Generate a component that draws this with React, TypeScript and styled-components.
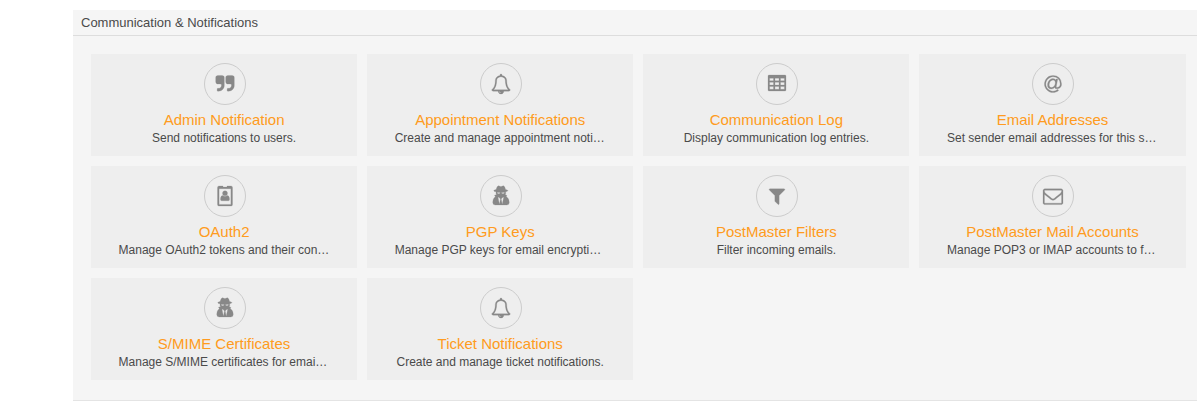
import React from 'react';
import styled, { createGlobalStyle } from 'styled-components';

const GlobalStyle = createGlobalStyle`
  body {
    margin: 0;
    background: #fff;
    font-family: Arial, "Liberation Sans", sans-serif;
    color: #4a4a4a;
  }
`;

const Page = styled.div`
  padding: 10px 0 0 73px;
  overflow: hidden;
`;

const Panel = styled.section`
  box-sizing: border-box;
  height: 391px;
  background: #f5f5f5;
  border-bottom: 1px solid #e4e4e4;
`;

const Header = styled.h2`
  box-sizing: border-box;
  height: 26px;
  margin: 0;
  padding: 0 8px;
  border-bottom: 1px solid #ddd;
  font-size: 13px;
  font-weight: normal;
  line-height: 25px;
`;

const Grid = styled.ul`
  display: grid;
  grid-template-columns: repeat(4, 266.15px);
  grid-auto-rows: 102px;
  gap: 10px;
  margin: 0;
  padding: 18px 11px 0 18px;
  list-style: none;
`;

const Card = styled.li`
  display: flex;
  flex-direction: column;
  align-items: center;
  min-width: 0;
  padding-top: 9px;
  box-sizing: border-box;
  background: #eee;
`;

const IconRing = styled.span`
  display: flex;
  align-items: center;
  justify-content: center;
  box-sizing: border-box;
  width: 42px;
  height: 42px;
  margin-left: 2px;
  border: 1px solid #ccc;
  border-radius: 50%;
  color: #888;
`;

const Glyph = styled.svg`
  display: block;
  width: 20px;
  height: 20px;
  overflow: visible;
  fill: currentColor;
  stroke: currentColor;
  stroke-width: 0.25px;

  path {
    vector-effect: non-scaling-stroke;
  }
`;

const Title = styled.h3`
  margin: 6px 0 0;
  color: #ff9b20;
  font-size: 15px;
  font-weight: normal;
  line-height: 18px;
  white-space: nowrap;
`;

const Description = styled.p<{ $shortened: boolean }>`
  width: 211px;
  margin: 2px 0 0;
  font-size: 12px;
  line-height: 14px;
  text-align: ${({ $shortened }) => ($shortened ? 'left' : 'center')};
  white-space: nowrap;
`;

type IconName = 'quote' | 'bell' | 'table' | 'at' | 'badge' | 'agent' | 'filter' | 'mail';

const paths: Record<IconName, { box: string; d: string }> = {
  quote: {
    box: '0 0 1792 1792',
    d: 'M832 320v704q0 104-40.5 198.5t-109.5 163.5-163.5 109.5-198.5 40.5h-64q-26 0-45-19t-19-45v-128q0-26 19-45t45-19h64q106 0 181-75t75-181v-32q0-40-28-68t-68-28h-224q-80 0-136-56t-56-136v-384q0-80 56-136t136-56h384q80 0 136 56t56 136zm896 0v704q0 104-40.5 198.5t-109.5 163.5-163.5 109.5-198.5 40.5h-64q-26 0-45-19t-19-45v-128q0-26 19-45t45-19h64q106 0 181-75t75-181v-32q0-40-28-68t-68-28h-224q-80 0-136-56t-56-136v-384q0-80 56-136t136-56h384q80 0 136 56t56 136z',
  },
  bell: {
    box: '0 0 1792 1792',
    d: 'M912 1696q0-16-16-16-59 0-101.5-42.5t-42.5-101.5q0-16-16-16t-16 16q0 73 51.5 124.5t124.5 51.5q16 0 16-16zm-666-288h1300q-266-300-266-832 0-51-24-105t-69-103-121.5-80.5-169.5-31.5-169.5 31.5-121.5 80.5-69 103-24 105q0 532-266 832zm1482 0q0 52-38 90t-90 38h-448q0 106-75 181t-181 75-181-75-75-181h-448q-52 0-90-38t-38-90q50-42 91-88t85-119.5 74.5-158.5 50-206 19.5-260q0-152 117-282.5t307-158.5q-8-19-8-39 0-40 28-68t68-28 68 28 28 68q0 20-8 39 190 28 307 158.5t117 282.5q0 139 19.5 260t50 206 74.5 158.5 85 119.5 91 88z',
  },
  table: {
    box: '0 1 20 20',
    d: 'M2 2h16q1 0 1 1v14q0 1-1 1H2q-1 0-1-1V3q0-1 1-1zM2.6 5.2v2.6h3.9V5.2zM8 5.2v2.6h4V5.2zM13.5 5.2v2.6h3.9V5.2zM2.6 9.3v2.7h3.9v-2.7zM8 9.3v2.7h4v-2.7zM13.5 9.3v2.7h3.9v-2.7zM2.6 13.6v2.7h3.9v-2.7zM8 13.6v2.7h4v-2.7zM13.5 13.6v2.7h3.9v-2.7z',
  },
  at: {
    box: '0 0 1792 1792',
    d: 'M1100 775q0-108-53.5-169t-147.5-61q-63 0-124 30.5t-110 84.5-79.5 137-30.5 180q0 112 53.5 173t150.5 61q96 0 176-66.5t122.5-166 42.5-203.5zm564 121q0 111-37 197t-98.5 135-131.5 74.5-145 27.5q-6 0-15.5.5t-16.5.5q-95 0-142-53-28-33-33-83-52 66-131.5 110t-173.5 44q-161 0-249.5-95.5t-88.5-269.5q0-157 66-290t179-210.5 246-77.5q87 0 155 35.5t106 99.5l2-19 11-56q1-6 5.5-12t9.5-6h118q5 0 13 11 5 5 3 16l-120 614q-5 24-5 48 0 39 12.5 52t44.5 13q28-1 57-5.5t73-24 77-50 57-89.5 24-137q0-292-174-466t-466-174q-130 0-248.5 51t-204 136.5-136.5 204-51 248.5 51 248.5 136.5 204 204 136.5 248.5 51q228 0 405-144 11-9 24-8t21 12l41 49q8 12 7 24-2 13-12 22-102 83-227.5 128t-258.5 45q-156 0-298-61t-245-164-164-245-61-298 61-298 164-245 245-164 298-61q344 0 556 212t212 556z',
  },
  badge: {
    box: '0 0 20 20',
    d: 'M4 0h4v.6q0 .5.5.5h3q.5 0 .5-.5V0h4q1.5 0 1.5 1.5v17q0 1.5-1.5 1.5H4q-1.5 0-1.5-1.5v-17Q2.5 0 4 0zM4.1 2.7v15.7h11.8V2.7zM10 4.8a2.5 2.5 0 0 1 0 5a2.5 2.5 0 0 1 0-5zM7.7 9.5q2.3 1.700 4.600 0q2.200.3 2.200 3.800q0 1.500-1.300 1.500H6.800q-1.300 0-1.300-1.500q0-3.500 2.200-3.800z',
  },
  agent: {
    box: '0.3 0.9 19.4 19.4',
    d: 'M7.5.7q.7 0 1.5.5.9.5 1.8 0 .9-.5 1.5-.5 1.2 0 2.1 3.6 2.3.5 2.3 1.1 0 .6-2.2 1.1.4 1.8-.4 3 1 .2 1.6.6l-.5 1.2q2.8 1.5 2.8 5.7 0 2.3-2.3 2.3H4.3q-2.3 0-2.3-2.3 0-4.2 2.5-5.7l-.8-1.5q.8-.4 1.9-.5-.7-1.2-.4-2.8Q3 6.1 3 5.4q0-.6 2.3-1.1Q6.3.7 7.5.7zM6.3 7q.1 1.5 1.5 1.5 1.3 0 1.6-1.2h.9q.3 1.2 1.6 1.2 1.4 0 1.5-1.5-3.5.5-7.1 0zM7 11.5l1.5 7 1-5-1-1.2zM12.7 11.5l-1.5.8-1 1.2 1 5z',
  },
  filter: {
    box: '0 0 1792 1792',
    d: 'M1595 295q17 41-14 70l-493 493v742q0 42-39 59-13 5-25 5-27 0-45-19l-256-256q-19-19-19-45v-486l-493-493q-31-29-14-70 17-39 59-39h1280q42 0 59 39z',
  },
  mail: {
    box: '0 0 1792 1792',
    d: 'M1664 1504v-768q-32 36-69 66-268 206-426 338-51 43-83 67t-86.5 48.5-102.5 24.5h-2q-48 0-102.5-24.5t-86.5-48.5-83-67q-158-132-426-338-37-30-69-66v768q0 13 9.5 22.5t22.5 9.5h1472q13 0 22.5-9.5t9.5-22.5zm0-1051v-24.5l-.5-13-3-12.5-5.5-9-9-7.5-14-2.5h-1472q-13 0-22.5 9.5t-9.5 22.5q0 168 147 284 193 152 401 317 6 5 35 29.5t46 37.5 44.5 31.5 50.5 27.5 43 9h2q20 0 43-9t50.5-27.5 44.5-31.5 46-37.5 35-29.5q208-165 401-317 54-43 100.5-115.5t46.5-131.5zm128-37v1088q0 66-47 113t-113 47h-1472q-66 0-113-47t-47-113v-1088q0-66 47-113t113-47h1472q66 0 113 47t47 113z',
  },
};

const modules: { icon: IconName; title: string; text: string }[] = [
  { icon: 'quote', title: 'Admin Notification', text: 'Send notifications to users.' },
  { icon: 'bell', title: 'Appointment Notifications', text: 'Create and manage appointment noti…' },
  { icon: 'table', title: 'Communication Log', text: 'Display communication log entries.' },
  { icon: 'at', title: 'Email Addresses', text: 'Set sender email addresses for this s…' },
  { icon: 'badge', title: 'OAuth2', text: 'Manage OAuth2 tokens and their con…' },
  { icon: 'agent', title: 'PGP Keys', text: 'Manage PGP keys for email encrypti…' },
  { icon: 'filter', title: 'PostMaster Filters', text: 'Filter incoming emails.' },
  { icon: 'mail', title: 'PostMaster Mail Accounts', text: 'Manage POP3 or IMAP accounts to f…' },
  { icon: 'agent', title: 'S/MIME Certificates', text: 'Manage S/MIME certificates for emai…' },
  { icon: 'bell', title: 'Ticket Notifications', text: 'Create and manage ticket notifications.' },
];

export default function App() {
  return (
    <Page>
      <GlobalStyle />
      <Panel>
        <Header>Communication &amp; Notifications</Header>
        <Grid>
          {modules.map(({ icon, title, text }) => (
            <Card key={title}>
              <IconRing>
                <Glyph viewBox={paths[icon].box} aria-hidden="true">
                  <path fillRule="evenodd" d={paths[icon].d} />
                </Glyph>
              </IconRing>
              <Title>{title}</Title>
              <Description $shortened={text.endsWith('…')}>{text}</Description>
            </Card>
          ))}
        </Grid>
      </Panel>
    </Page>
  );
}
